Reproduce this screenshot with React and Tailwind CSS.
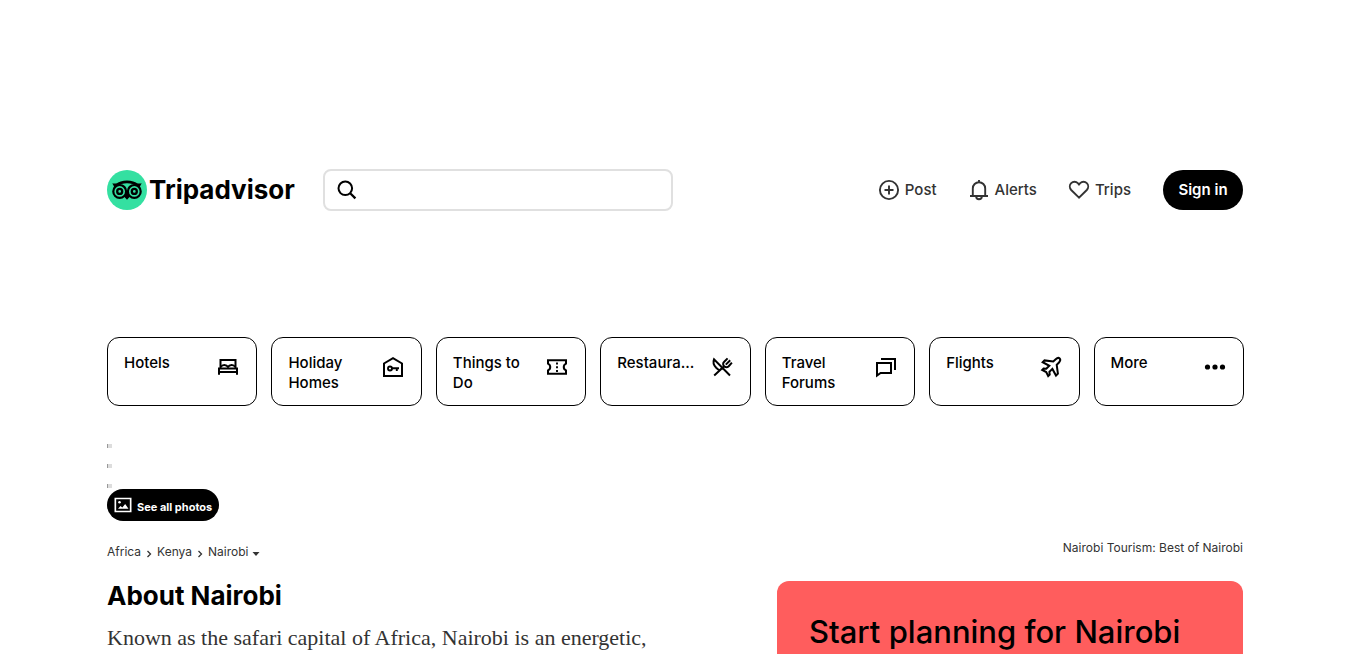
import React from "react";

function Icon({ className = "size-6", children }) {
  return (
    <svg viewBox="0 0 24 24" fill="none" stroke="currentColor" strokeWidth="2" className={className} aria-hidden="true">
      {children}
    </svg>
  );
}

const PlusIcon = () => (
  <Icon>
    <circle cx="12" cy="12" r="9.1" strokeWidth="1.900" />
    <path d="M12 7.500v9M7.500 12h9" strokeWidth="1.900" />
  </Icon>
);

const BellIcon = () => (
  <Icon>
    <path d="M3 18h18M5.800 18v-7.600a6.200 6.200 0 0 1 12.400 0V18M12 2v2.600M9.200 18.800a2.800 2.400 0 0 0 5.600 0" strokeWidth="1.900" />
  </Icon>
);

const HeartIcon = () => (
  <Icon>
    <path d="M12 19.600 4.200 12a4.900 4.900 0 0 1 0-6.800 4.600 4.600 0 0 1 6.600 0L12 6.500l1.200-1.300a4.600 4.600 0 0 1 6.600 0 4.900 4.900 0 0 1 0 6.800Z" strokeWidth="1.900" />
  </Icon>
);

const SearchIcon = () => (
  <Icon className="size-6 shrink-0">
    <circle cx="10.300" cy="10.300" r="6.800" strokeWidth="2" />
    <path d="m15.200 15.200 5.200 5.200" strokeWidth="2.300" />
  </Icon>
);

const BedIcon = () => (
  <Icon>
    <path d="M4.500 13V5h15v8M3 19.800V13.500h18v6.300M3 17h18" strokeWidth="2" />
    <path d="M5 12c1-2.700 5.600-2.700 7 0 1.400-2.700 6-2.700 7 0" strokeWidth="1.800" />
  </Icon>
);

const HouseIcon = () => (
  <Icon>
    <path d="M3 21V8.500l9-5.300 9 5.300V21Z" strokeWidth="2" />
    <circle cx="9" cy="13.500" r="2" strokeWidth="1.900" />
    <path d="M11 13.200h7M15.800 13v3" strokeWidth="1.900" />
  </Icon>
);

const TicketIcon = () => (
  <Icon>
    <path d="M3 5.200h18v3.400a3.700 3.700 0 0 0 0 6.800v3.400H3v-3.400a3.700 3.700 0 0 0 0-6.800Z" strokeWidth="2" />
    <path d="M12 7.500v9.500" strokeWidth="1.900" strokeDasharray="1.900 1.900" />
  </Icon>
);

const CutleryIcon = () => (
  <Icon>
    <path d="M20 20.500 4 4.400c-1.200 3-.2 6 2.200 8.400l3.100 2.600 2.200-1.800M4.200 20.500l10-9.300M14.200 11.200c-1.500-1.500-1.400-3.100 0-4.400l3.400-3.400M14.200 11.200c1.600 1.400 3.200 1.300 4.500 0l3.200-3.500M15.800 9.600l4.400-4.400" strokeWidth="2" />
  </Icon>
);

const ForumIcon = () => (
  <Icon>
    <path d="M3 8h14v10H6.600L3 20.600Z" strokeWidth="2" />
    <path d="M7 4h14v11" strokeWidth="2" />
  </Icon>
);

const PlaneIcon = () => (
  <Icon>
    <path d="M20.700 3.400c-1.200-1-2.800-.3-4 .8l-2.400 2.200-8.800-1-1.800 1.800 6.600 3.600-3 3-2.700-.3-1.400 1.500 4 2 2 4 1.500-1.400-.3-2.700 3-3 3.600 6.600 1.900-1.900-1.200-8.700 2.300-2.400c1-1.200 1.700-3 .7-4.100Z" strokeWidth="2" />
  </Icon>
);

const DotsIcon = () => (
  <Icon>
    <g fill="currentColor" stroke="none">
      <circle cx="4.500" cy="12" r="2.600" />
      <circle cx="12" cy="12" r="2.600" />
      <circle cx="19.500" cy="12" r="2.600" />
    </g>
  </Icon>
);

const PhotoIcon = () => (
  <Icon className="size-5">
    <path d="M2.800 4.200h18.400v15.600H2.800Z" strokeWidth="2" />
    <path d="m6 16.500 3-3.200 2.200 1.600 3.400-4 4 5.600Z" fill="currentColor" stroke="none" />
    <circle cx="7.800" cy="8.800" r="1.500" fill="currentColor" stroke="none" />
  </Icon>
);

const OwlMark = () => (
  <svg viewBox="0 0 40 40" className="size-10 shrink-0" aria-hidden="true">
    <circle cx="20" cy="20" r="20" fill="#34e0a1" />
    <g fill="none" stroke="#000">
      <path d="M9.500 15.200C15 10.700 25 10.700 30.500 15.200" strokeWidth="2.600" />
      <circle cx="12.700" cy="21.400" r="6.400" strokeWidth="2.200" />
      <circle cx="27.300" cy="21.400" r="6.400" strokeWidth="2.200" />
      <circle cx="12.700" cy="21.400" r="2.500" strokeWidth="2.300" />
      <circle cx="27.300" cy="21.400" r="2.500" strokeWidth="2.300" />
    </g>
    <path d="M5.200 13.600h6.600l-4.400 4.500c-.3-1.700-1-3.100-2.200-4.500ZM34.800 13.600h-6.600l4.400 4.500c.3-1.700 1-3.100 2.200-4.500ZM16.800 26.200 20 29.700l3.200-3.500L20 22Z" />
  </svg>
);

const categories = [
  { label: "Hotels", Glyph: BedIcon },
  { label: "Holiday Homes", Glyph: HouseIcon },
  { label: "Things to Do", Glyph: TicketIcon },
  { label: "Restaura...", Glyph: CutleryIcon },
  { label: "Travel Forums", Glyph: ForumIcon },
  { label: "Flights", Glyph: PlaneIcon },
  { label: "More", Glyph: DotsIcon },
];

const actions = [
  { label: "Post", Glyph: PlusIcon },
  { label: "Alerts", Glyph: BellIcon },
  { label: "Trips", Glyph: HeartIcon },
];

const Chevron = () => (
  <svg viewBox="0 0 8 8" fill="none" stroke="currentColor" className="mt-1 size-2" aria-hidden="true">
    <path d="m2.500 1 3 3-3 3" strokeWidth="1.300" />
  </svg>
);

export default function App() {
  return (
    <div className="h-screen overflow-hidden bg-white pr-4 font-['Inter','Liberation_Sans',sans-serif] text-black">
      <div className="mx-auto flex h-full max-w-[1136px] flex-col">
        <header className="mt-[169px] flex items-center">
          <a href="#" className="flex w-[216px] items-center gap-[2px]">
            <OwlMark />
            <span className="text-[26px] leading-10 font-bold">Tripadvisor</span>
          </a>
          <label className="flex h-[42px] w-[350px] items-center gap-2 rounded-lg border-2 border-[#e0e0e0] px-[10px]">
            <SearchIcon />
            <input type="search" aria-label="Search" className="min-w-0 flex-1 outline-none" />
          </label>
          <nav className="ml-auto flex items-center gap-[30px] text-[#333]">
            {actions.map(({ label, Glyph }) => (
              <a key={label} href="#" className="flex items-center gap-1 text-[15px] font-medium">
                <Glyph />
                {label}
              </a>
            ))}
          </nav>
          <button className="ml-8 h-10 w-20 rounded-full bg-black text-[15px] font-semibold text-white">Sign in</button>
        </header>

        <nav className="-mr-px mt-[126px] grid grid-cols-7 gap-[14px]">
          {categories.map(({ label, Glyph }) => (
            <a key={label} href="#" className="flex min-h-[69px] justify-between rounded-xl border border-black px-4 pt-[15px] pb-3">
              <span className="w-20 text-[15px] leading-5 font-medium">{label}</span>
              <span className="mt-[2px] shrink-0">
                <Glyph />
              </span>
            </a>
          ))}
        </nav>

        <div className="mt-[38px] flex flex-col gap-4">
          {[0, 1, 2].map((n) => (
            <span key={n} className="h-1 w-[5px] border-l border-[#999] bg-[#ddd]" />
          ))}
        </div>
        <button className="mt-px flex h-8 items-center gap-1 self-start rounded-full bg-black pr-[7px] pl-[6px] text-[11px] font-bold text-white">
          <PhotoIcon />
          <span className="pt-1">See all photos</span>
        </button>

        <div className="mt-[19px] flex items-start justify-between text-xs leading-4 text-[#333]">
          <nav aria-label="Breadcrumb" className="flex items-center gap-1 pt-1">
            <a href="#">Africa</a>
            <Chevron />
            <a href="#">Kenya</a>
            <Chevron />
            <button className="flex items-center gap-1">
              Nairobi
              <svg viewBox="0 0 8 4" className="mt-1 h-1 w-2" fill="currentColor" aria-hidden="true">
                <path d="M.5 0h7L4 4Z" />
              </svg>
            </button>
          </nav>
          <span>Nairobi Tourism: Best of Nairobi</span>
        </div>

        <main className="mt-[21px] flex min-h-0 flex-1 justify-between">
          <section className="w-[570px]">
            <h1 className="text-[26px] leading-[30px] font-bold">About Nairobi</h1>
            <p className="mt-3 font-['Liberation_Serif',serif] text-[22px] leading-[30px] text-[#333]">
              Known as the safari capital of Africa, Nairobi is an energetic,
            </p>
          </section>
          <aside className="w-[466px] rounded-t-xl bg-[#ff5d5d] px-8 pt-8">
            <h2 className="text-[31px] leading-[38px] font-medium whitespace-nowrap">Start planning for Nairobi</h2>
          </aside>
        </main>
      </div>
    </div>
  );
}
